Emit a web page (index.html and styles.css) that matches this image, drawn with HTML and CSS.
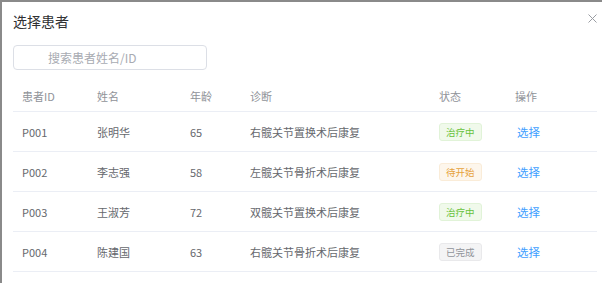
FILE: index.html
```html
<!DOCTYPE html>
<html lang="zh-CN">
<head>
<meta charset="utf-8">
<title>选择患者</title>
<link rel="stylesheet" href="styles.css">
</head>
<body>
<div class="modal">
  <div class="modal-header">
    <h2 class="modal-title">选择患者</h2>
    <button class="close-btn" aria-label="关闭">
      <svg width="9" height="9" viewBox="0 0 9 9"><path d="M0.5 0.5L8.5 8.5M8.5 0.5L0.5 8.5" stroke="#9a9da3" stroke-width="1" fill="none"/></svg>
    </button>
  </div>
  <div class="search">
    <input class="search-input" type="text" placeholder="搜索患者姓名/ID">
  </div>
  <div class="table">
    <div class="row head">
      <div class="cell">患者ID</div>
      <div class="cell">姓名</div>
      <div class="cell">年龄</div>
      <div class="cell">诊断</div>
      <div class="cell">状态</div>
      <div class="cell">操作</div>
    </div>
    <div class="row">
      <div class="cell">P001</div>
      <div class="cell">张明华</div>
      <div class="cell">65</div>
      <div class="cell">右髋关节置换术后康复</div>
      <div class="cell"><span class="tag tag-green">治疗中</span></div>
      <div class="cell"><a class="link">选择</a></div>
    </div>
    <div class="row">
      <div class="cell">P002</div>
      <div class="cell">李志强</div>
      <div class="cell">58</div>
      <div class="cell">左髋关节骨折术后康复</div>
      <div class="cell"><span class="tag tag-orange">待开始</span></div>
      <div class="cell"><a class="link">选择</a></div>
    </div>
    <div class="row">
      <div class="cell">P003</div>
      <div class="cell">王淑芳</div>
      <div class="cell">72</div>
      <div class="cell">双髋关节置换术后康复</div>
      <div class="cell"><span class="tag tag-green">治疗中</span></div>
      <div class="cell"><a class="link">选择</a></div>
    </div>
    <div class="row">
      <div class="cell">P004</div>
      <div class="cell">陈建国</div>
      <div class="cell">63</div>
      <div class="cell">右髋关节骨折术后康复</div>
      <div class="cell"><span class="tag tag-gray">已完成</span></div>
      <div class="cell"><a class="link">选择</a></div>
    </div>
  </div>
</div>
</body>
</html>
```

FILE: styles.css
```css
* { box-sizing: border-box; }
html, body { height: 100%; }
body {
  margin: 0;
  padding: 2px 0 0 2px;
  background: #8a8a8a;
  font-family: "Noto Sans CJK SC", sans-serif;
  overflow: hidden;
}
.modal {
  background: #fff;
  height: 100%;
  padding: 0 0 0 11px;
}
.modal-header {
  display: flex;
  align-items: center;
  justify-content: space-between;
  padding-top: 9px;
  height: 29px;
}
.modal-title {
  margin: 0;
  font-size: 14px;
  line-height: 20px;
  font-weight: normal;
  color: #303133;
}
.close-btn {
  border: 0;
  background: none;
  padding: 0;
  margin: -6px 5px 0 0;
  width: 9px;
  height: 9px;
  display: flex;
}
.search { margin-top: 13px; }
.search-input {
  width: 194px;
  height: 25px;
  border: 1px solid #dcdfe6;
  border-radius: 4px;
  padding: 0 0 0 34px;
  font-family: inherit;
  font-size: 12px;
  color: #606266;
  outline: none;
}
.search-input::placeholder { color: #a8abb2; }
.table {
  margin-top: 10px;
  width: 584px;
}
.row {
  display: grid;
  grid-template-columns: 75px 93px 60px 189px 76px 1fr;
  height: 40px;
  align-items: center;
  border-bottom: 1px solid #ebeef5;
  font-size: 11px;
  color: #66686d;
}
.row.head {
  height: 32px;
  color: #909399;
  font-weight: normal;
}
.cell {
  padding-left: 9px;
  white-space: nowrap;
  line-height: 16px;
}
.tag {
  display: inline-block;
  height: 18px;
  line-height: 16px;
  padding: 0 6px;
  font-size: 9.5px;
  border: 1px solid;
  border-radius: 3px;
}
.tag-green { background: #f0f9eb; border-color: #e1f3d8; color: #67c23a; }
.tag-orange { background: #fdf6ec; border-color: #faecd8; color: #e6a23c; }
.tag-gray { background: #f4f4f5; border-color: #e9e9eb; color: #909399; }
.link {
  color: #409eff;
  font-size: 11.5px;
  padding-left: 2px;
  cursor: pointer;
}
```
